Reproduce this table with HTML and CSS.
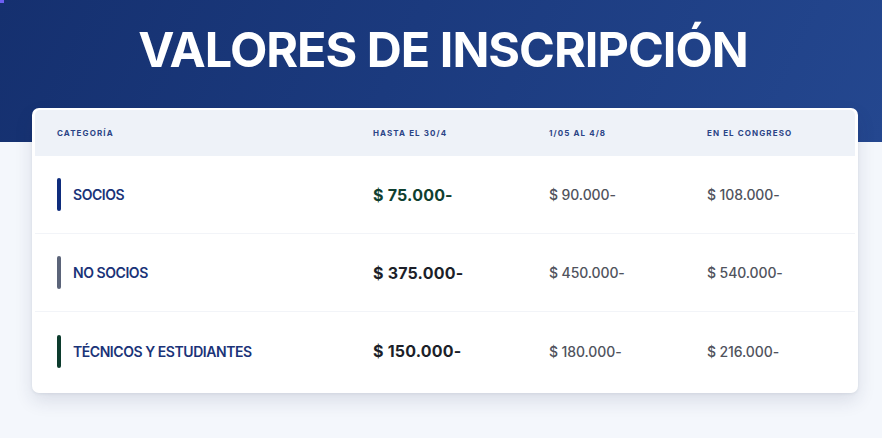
FILE: index.html
```html
<!DOCTYPE html>
<html lang="es">
<head>
<meta charset="utf-8">
<title>Valores de inscripción</title>
<link rel="stylesheet" href="styles.css">
</head>
<body>
<div class="corner-mark"></div>
<main class="page">
  <h1 class="title">VALORES DE INSCRIPCIÓN</h1>
  <section class="card">
    <div class="row head">
      <div class="th">Categoría</div>
      <div class="th">Hasta el 30/4</div>
      <div class="th">1/05 al 4/8</div>
      <div class="th">En el congreso</div>
    </div>
    <div class="row">
      <div class="cat"><span class="bar bar-navy"></span><span class="cat-name">SOCIOS</span></div>
      <div class="price-main price-green">$ 75.000-</div>
      <div class="price">$ 90.000-</div>
      <div class="price">$ 108.000-</div>
    </div>
    <div class="row">
      <div class="cat"><span class="bar bar-gray"></span><span class="cat-name">NO SOCIOS</span></div>
      <div class="price-main">$ 375.000-</div>
      <div class="price">$ 450.000-</div>
      <div class="price">$ 540.000-</div>
    </div>
    <div class="row last">
      <div class="cat"><span class="bar bar-green"></span><span class="cat-name">TÉCNICOS Y ESTUDIANTES</span></div>
      <div class="price-main">$ 150.000-</div>
      <div class="price">$ 180.000-</div>
      <div class="price">$ 216.000-</div>
    </div>
  </section>
</main>
</body>
</html>
```
FILE: styles.css
```css
* { box-sizing: border-box; }
html, body { margin: 0; padding: 0; }
body {
  font-family: Inter, "Noto Sans", "Liberation Sans", sans-serif;
  background: #f4f7fc;
  width: 882px;
  height: 438px;
  overflow: hidden;
  position: relative;
}
.corner-mark {
  position: absolute;
  left: 0; top: 0;
  width: 4px; height: 3px;
  background: #6d5ff2;
}
.page {
  background: linear-gradient(115deg, #15306f 0%, #1b3a7e 45%, #24478f 100%) no-repeat;
  background-size: 100% 142px;
  padding-top: 22px;
  height: 438px;
}
.title {
  margin: 0;
  text-align: center;
  color: #ffffff;
  font-size: 48.5px;
  line-height: 55px;
  font-weight: 700;
  letter-spacing: -1px;
  padding-left: 4px;
}
.card {
  margin: 31px 24px 0 32px;
  background: #ffffff;
  border-radius: 7px;
  padding: 2px 3px 3px 3px;
  box-shadow: 0 8px 18px rgba(30, 45, 80, 0.12), 0 1px 3px rgba(30, 45, 80, 0.08);
}
.row {
  display: grid;
  grid-template-columns: 316px 176px 158px 1fr;
  align-items: center;
  padding: 0 22px;
  height: 78px;
  border-bottom: 1px solid #f2f4f8;
}
.row.last { border-bottom: none; }
.row.head {
  height: 46px;
  background: #eef2f8;
  border-bottom: none;
  border-radius: 5px 5px 0 0;
}
.th {
  font-size: 8px;
  font-weight: 700;
  letter-spacing: 1.1px;
  text-transform: uppercase;
  color: #2b4486;
}
.cat {
  display: flex;
  align-items: center;
  gap: 12px;
}
.bar {
  width: 4px;
  height: 33px;
  border-radius: 2px;
  flex: none;
}
.bar-navy { background: #0e2c7c; }
.bar-gray { background: #5b6479; }
.bar-green { background: #0c3b2d; }
.cat-name {
  font-size: 14px;
  font-weight: 600;
  color: #1a3378;
  letter-spacing: -0.45px;
}
.price-main {
  font-size: 16px;
  font-weight: 700;
  color: #1c1f29;
  letter-spacing: 0.2px;
}
.price-green { color: #0f3f30; }
.price {
  font-size: 14px;
  font-weight: 500;
  color: #50535d;
  letter-spacing: -0.1px;
}
```
